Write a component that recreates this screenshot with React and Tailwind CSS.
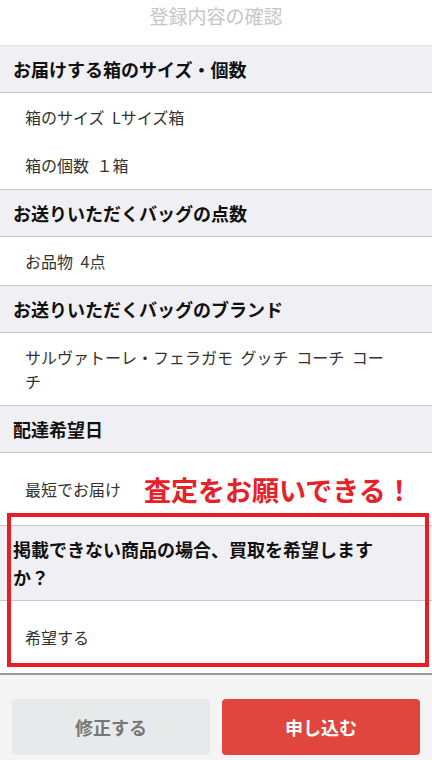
import React from 'react';

// 確認画面のセクション定義
const SECTIONS = [
  { title: 'お届けする箱のサイズ・個数', items: ['箱のサイズ Lサイズ箱', '箱の個数 １箱'] },
  { title: 'お送りいただくバッグの点数', items: ['お品物 4点'] },
  { title: 'お送りいただくバッグのブランド', items: ['サルヴァトーレ・フェラガモ グッチ コーチ コーチ'] },
];

const Header = ({ children }) => (
  <div className="bg-[#efeff4] border-b border-[#c8c7cc] pl-[13px] pr-[30px] py-[9px] text-[18px] leading-[28px] font-bold text-[#111]">
    {children}
  </div>
);

const Item = ({ children, tall }) => (
  <div
    className={`pl-[25px] pr-[48px] text-[16px] leading-[24px] text-[#333] flex items-center ${
      tall ? 'h-[72px]' : 'min-h-[48px] py-[12px]'
    }`}
  >
    <span className="[word-spacing:4px]">{children}</span>
  </div>
);

export default function App() {
  return (
    <div
      className="relative w-[432px] bg-white overflow-hidden"
      style={{ fontFamily: '"Noto Sans CJK JP", "Noto Sans", sans-serif' }}
    >
      {/* ナビバー */}
      <div className="h-[46px] border-b border-[#e3e3e3] flex justify-center pt-[3px]">
        <span className="text-[19px] leading-[26px] text-[#c6c6c6]">登録内容の確認</span>
      </div>

      {SECTIONS.map((s) => (
        <div key={s.title} className="border-b border-[#c8c7cc]">
          <Header>{s.title}</Header>
          {s.items.map((it) => (
            <Item key={it}>{it}</Item>
          ))}
        </div>
      ))}

      <div className="border-b border-[#c8c7cc]">
        <Header>配達希望日</Header>
        <Item tall>最短でお届け</Item>
      </div>

      <div>
        <Header>掲載できない商品の場合、買取を希望しますか？</Header>
        <Item tall>希望する</Item>
      </div>

      {/* フッター */}
      <div className="border-t-2 border-[#9a9a9a] bg-[#f4f4f4] px-[12px] pt-[24px] pb-[20px] flex gap-[12px]">
        <button className="flex-1 h-[56px] rounded-[4px] bg-[#e7eaeb] text-[#777] text-[18px] font-bold">
          修正する
        </button>
        <button className="flex-1 h-[56px] rounded-[4px] bg-[#e0463d] text-white text-[18px] font-bold">
          申し込む
        </button>
      </div>

      {/* 注釈 */}
      <div className="absolute left-[144px] top-[475px] text-[27px] leading-[30px] font-bold text-[#e8202a]">
        査定をお願いできる！
      </div>
      <div className="absolute left-[7px] top-[513px] w-[422px] h-[154px] border-[4px] border-[#ea1c24] pointer-events-none" />
    </div>
  );
}
